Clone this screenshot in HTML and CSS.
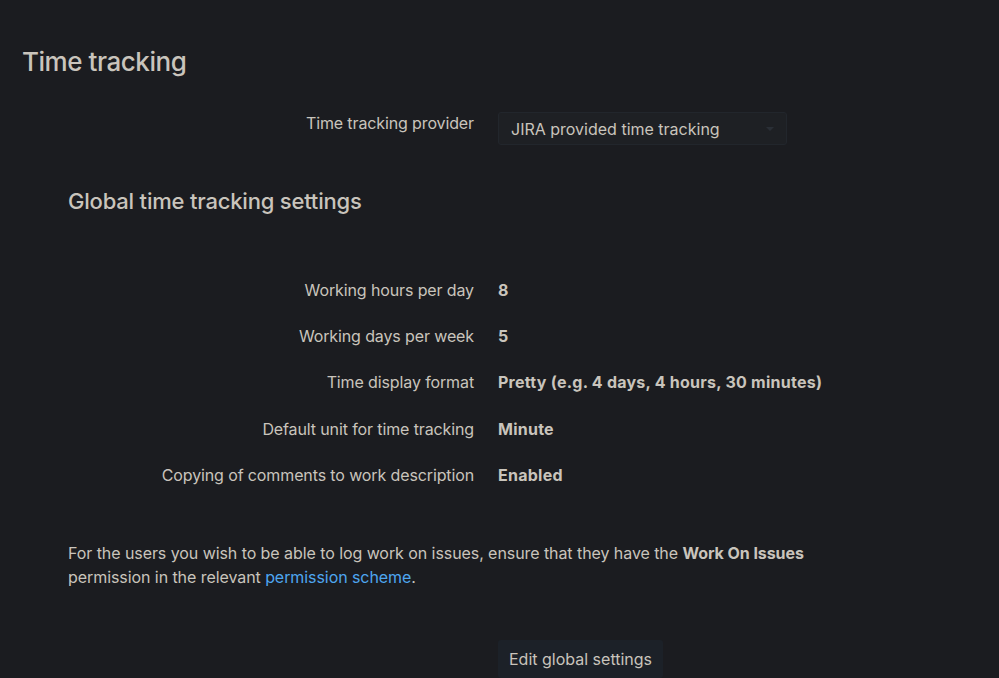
FILE: index.html
```html
<!DOCTYPE html>
<html lang="en">
<head>
<meta charset="utf-8">
<title>Time tracking</title>
<link rel="stylesheet" href="styles.css">
</head>
<body>
<main class="page">
  <h1 class="title">Time tracking</h1>
  <div class="section">
    <div class="grid provider">
      <div class="label">Time tracking provider</div>
      <div class="value">
        <div class="select">
          <span>JIRA provided time tracking</span>
          <span class="arrow"></span>
        </div>
      </div>
    </div>
    <h2 class="subtitle">Global time tracking settings</h2>
    <div class="grid settings">
      <div class="label">Working hours per day</div>
      <div class="value strong">8</div>
      <div class="label">Working days per week</div>
      <div class="value strong">5</div>
      <div class="label">Time display format</div>
      <div class="value strong">Pretty (e.g. 4 days, 4 hours, 30 minutes)</div>
      <div class="label">Default unit for time tracking</div>
      <div class="value strong">Minute</div>
      <div class="label">Copying of comments to work description</div>
      <div class="value strong">Enabled</div>
    </div>
    <p class="note">For the users you wish to be able to log work on issues, ensure that they have the <strong>Work On Issues</strong><br>permission in the relevant <a href="#" class="link">permission scheme</a>.</p>
    <div class="grid actions">
      <div></div>
      <div><button class="btn" type="button">Edit global settings</button></div>
    </div>
  </div>
</main>
</body>
</html>
```
FILE: styles.css
```css
html, body {
  margin: 0;
  padding: 0;
  background: #1b1c20;
  height: 100%;
  overflow: hidden;
}
body {
  font-family: Inter, "Noto Sans", sans-serif;
  color: #c9c4bc;
  font-size: 16px;
}
.page {
  padding: 44px 0 0 22px;
}
.title {
  margin: 0;
  font-size: 26px;
  font-weight: 500;
  line-height: 36px;
  letter-spacing: -0.45px;
}
.section {
  padding-left: 46px;
  padding-top: 32px;
}
.grid {
  display: grid;
  grid-template-columns: 406px 1fr;
  column-gap: 24px;
}
.label {
  text-align: right;
  line-height: 22px;
  letter-spacing: -0.12px;
}
.value {
  line-height: 22px;
}
.strong {
  font-weight: 700;
  letter-spacing: 0.25px;
}
.select {
  width: 289px;
  height: 33px;
  box-sizing: border-box;
  background: #1e2024;
  border: 1px solid #22262c;
  border-radius: 3px;
  display: flex;
  align-items: center;
  justify-content: space-between;
  padding: 0 12px 0 12px;
}
.arrow {
  width: 0;
  height: 0;
  border-left: 4px solid transparent;
  border-right: 4px solid transparent;
  border-top: 4px solid #2a2f36;
}
.subtitle {
  margin: 41px 0 0 0;
  font-size: 22px;
  font-weight: 500;
  line-height: 30px;
  letter-spacing: -0.2px;
}
.settings {
  margin-top: 63px;
  row-gap: 24.2px;
}
.note {
  margin: 55px 0 0 0;
  line-height: 24px;
  letter-spacing: -0.07px;
}
.note strong {
  font-weight: 700;
}
.link {
  color: #4ea6f0;
  text-decoration: none;
}
.actions {
  margin-top: 51px;
}
.btn {
  font: inherit;
  color: #c9c4bc;
  background: #1c2128;
  border: none;
  border-radius: 3px;
  height: 38px;
  padding: 0 11px;
}
```
